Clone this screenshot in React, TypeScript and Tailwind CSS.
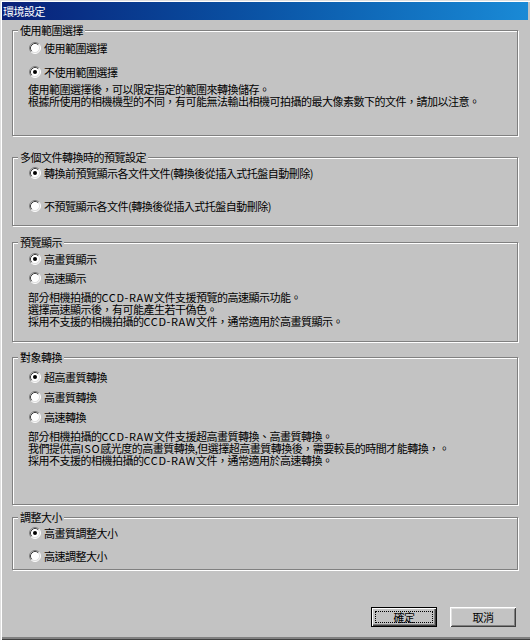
import React from "react";

const Radio = ({ checked }: { checked?: boolean }) => (
  <svg width="12" height="12" viewBox="0 0 12 12" className="shrink-0">
    <circle cx="6" cy="6" r="5" fill="#ffffff" />
    <path d="M2.11 9.89 A5.5 5.5 0 0 1 9.89 2.11" stroke="#808080" strokeWidth="1" fill="none" />
    <path d="M9.89 2.11 A5.5 5.5 0 0 1 2.11 9.89" stroke="#ffffff" strokeWidth="1" fill="none" />
    <path d="M2.82 9.18 A4.5 4.5 0 0 1 9.18 2.82" stroke="#404040" strokeWidth="1" fill="none" />
    <path d="M9.18 2.82 A4.5 4.5 0 0 1 2.82 9.18" stroke="#dfdfdf" strokeWidth="1" fill="none" />
    {checked && <circle cx="6" cy="6" r="2" fill="#000000" />}
  </svg>
);

const Row = ({ checked, children, mt }: { checked?: boolean; children: React.ReactNode; mt: string }) => (
  <div className={`flex h-[16px] items-center gap-[3px] ml-[16px] ${mt}`}>
    <Radio checked={checked} />
    <span className="text-[11px] leading-[12px] tracking-[-0.5px] whitespace-nowrap">{children}</span>
  </div>
);

const Para = ({ lines, mt }: { lines: React.ReactNode[]; mt: string }) => (
  <div className={`ml-[15px] text-[11px] leading-[12px] tracking-[-0.5px] ${mt}`}>
    {lines.map((l, i) => (
      <div key={i} className="whitespace-nowrap">
        {l}
      </div>
    ))}
  </div>
);

const Group = ({ title, h, mt, children }: { title: string; h: string; mt: string; children: React.ReactNode }) => (
  <div
    className={`mx-[12px] box-border border border-[#808080] shadow-[1px_1px_0_#ffffff,inset_1px_1px_0_#ffffff] ${h} ${mt}`}
  >
    <div className="-mt-[7px] ml-[5px] w-fit bg-[#c3c3c3] px-[2px] text-[11px] leading-[12px] tracking-[-0.5px] whitespace-nowrap">
      {title}
    </div>
    {children}
  </div>
);

const L = ({ children }: { children: React.ReactNode }) => (
  <span className="tracking-[0.6px]">{children}</span>
);

export default function App() {
  return (
    <div className="w-[530px] h-[640px] bg-[#c3c3c3] text-black font-['Noto_Sans_CJK_TC','Noto_Sans',sans-serif] shadow-[inset_1px_1px_0_#dfdfdf,inset_2px_2px_0_#ffffff,inset_0_-1px_0_#404040,inset_0_-3px_0_#808080] flex flex-col pt-[2px] px-[2px] overflow-hidden">
      <div className="h-[18px] bg-gradient-to-r from-[#0a1f78] to-[#1a8ad6] flex items-center pl-[1px]">
        <span className="text-white text-[11px] leading-[12px] tracking-[-0.5px]">環境設定</span>
      </div>
      <div className="flex flex-col -mx-[2px]">
        <Group title="使用範圍選擇" h="h-[106px]" mt="mt-[10px]">
          <Row mt="mt-[4px]">使用範圍選擇</Row>
          <Row checked mt="mt-[8px]">不使用範圍選擇</Row>
          <Para
            mt="mt-[3px]"
            lines={[
              "使用範圍選擇後，可以限定指定的範圍來轉換儲存。",
              "根據所使用的相機機型的不同，有可能無法輸出相機可拍攝的最大像素數下的文件，請加以注意。",
            ]}
          />
        </Group>
        <Group title="多個文件轉換時的預覽設定" h="h-[69px]" mt="mt-[21px]">
          <Row checked mt="mt-[2px]">轉換前預覽顯示各文件文件(轉換後從插入式托盤自動刪除)</Row>
          <Row mt="mt-[17px]">不預覽顯示各文件(轉換後從插入式托盤自動刪除)</Row>
        </Group>
        <Group title="預覽顯示" h="h-[100px]" mt="mt-[16px]">
          <Row checked mt="mt-[3px]">高畫質顯示</Row>
          <Row mt="mt-[3px]">高速顯示</Row>
          <Para
            mt="mt-[5px]"
            lines={[
              <>部分相機拍攝的<L>CCD-RAW</L>文件支援預覽的高速顯示功能。</>,
              "選擇高速顯示後，有可能產生若干偽色。",
              <>採用不支援的相機拍攝的<L>CCD-RAW</L>文件，通常適用於高畫質顯示。</>,
            ]}
          />
        </Group>
        <Group title="對象轉換" h="h-[148px]" mt="mt-[15px]">
          <Row checked mt="mt-[6px]">超高畫質轉換</Row>
          <Row mt="mt-[4px]">高畫質轉換</Row>
          <Row mt="mt-[4px]">高速轉換</Row>
          <Para
            mt="mt-[5px]"
            lines={[
              <>部分相機拍攝的<L>CCD-RAW</L>文件支援超高畫質轉換、高畫質轉換。</>,
              <>我們提供高<L>ISO</L>感光度的高畫質轉換,但選擇超高畫質轉換後，需要較長的時間才能轉換，。</>,
              <>採用不支援的相機拍攝的<L>CCD-RAW</L>文件，通常適用於高速轉換。</>,
            ]}
          />
        </Group>
        <Group title="調整大小" h="h-[53px]" mt="mt-[12px]">
          <Row checked mt="mt-[2px]">高畫質調整大小</Row>
          <Row mt="mt-[7px]">高速調整大小</Row>
        </Group>
        <div className="mt-[37px] flex justify-end gap-[13px] pr-[14px]">
          <button className="w-[66px] h-[20px] box-border border border-black bg-[#c3c3c3] p-[3px] shadow-[inset_1px_1px_0_#ffffff,inset_-1px_-1px_0_#404040,inset_-2px_-2px_0_#808080]">
            <span className="flex h-full items-center justify-center border border-dotted border-black text-[11px] leading-[12px] tracking-[-0.5px]">
              確定
            </span>
          </button>
          <button className="w-[66px] h-[20px] box-border bg-[#c3c3c3] flex items-center justify-center text-[11px] leading-[12px] tracking-[-0.5px] shadow-[inset_1px_1px_0_#ffffff,inset_-1px_-1px_0_#404040,inset_2px_2px_0_#dfdfdf,inset_-2px_-2px_0_#808080]">
            取消
          </button>
        </div>
      </div>
    </div>
  );
}
